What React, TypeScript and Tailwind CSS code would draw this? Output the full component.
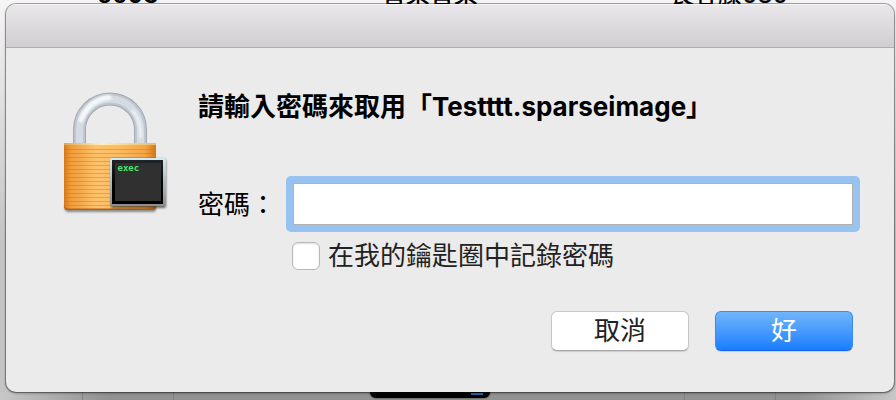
import { useState } from "react";

const stripes = Array.from({ length: 16 }, (_, i) => 58 + i * 4 - 0.5);

function LockIcon() {
  return (
    <svg viewBox="0 -1 108 124" className="h-[124px] w-[108px] shrink-0" role="img" aria-label="exec">
      <defs>
        <linearGradient id="body" x1="0" x2="1" y1="0" y2="0">
          <stop offset="0" stopColor="#d67a1c" />
          <stop offset="0.07" stopColor="#f09a38" />
          <stop offset="0.35" stopColor="#ffc26c" />
          <stop offset="0.6" stopColor="#fdbb62" />
          <stop offset="0.88" stopColor="#f5a545" />
          <stop offset="1" stopColor="#d47618" />
        </linearGradient>
        <linearGradient id="rim" x1="0" x2="1" y1="0" y2="0">
          <stop offset="0" stopColor="#e3a64c" />
          <stop offset="0.4" stopColor="#fff0bb" />
          <stop offset="1" stopColor="#e9bd6c" />
        </linearGradient>
        <linearGradient id="frame" x1="0" x2="0" y1="0" y2="1">
          <stop offset="0" stopColor="#d3ebf2" />
          <stop offset="0.4" stopColor="#b9c2c6" />
          <stop offset="1" stopColor="#8b8e90" />
        </linearGradient>
        <linearGradient id="screen" x1="0" x2="0" y1="0" y2="1">
          <stop offset="0" stopColor="#222527" />
          <stop offset="0.5" stopColor="#050505" />
          <stop offset="1" stopColor="#000000" />
        </linearGradient>
        <filter id="soft" x="-20%" y="-20%" width="140%" height="140%">
          <feGaussianBlur stdDeviation="1.2" />
        </filter>
      </defs>
      <g fill="none">
        <path d="M17.500 54V37.500A30.500 30.500 0 0 1 78.500 37.500V54" stroke="#a3a9b1" strokeWidth="13" />
        <path d="M17.500 54V37.500A30.500 30.500 0 0 1 78.500 37.500V54" stroke="#bfc6cf" strokeWidth="11" />
        <path d="M17.500 54V37.500A30.500 30.500 0 0 1 78.500 37.500V54" stroke="#d5dbe2" strokeWidth="7" />
        <path d="M19 28C24 15 35 6 47 5.500" stroke="#f5f8fb" strokeWidth="5" strokeLinecap="round" filter="url(#soft)" />
        <path d="M70 18C76 24 79 32 79 46" stroke="#eef2f6" strokeWidth="3" filter="url(#soft)" />
      </g>
      <rect x="3" y="110" width="91" height="10" rx="3" fill="#555" opacity="0.65" filter="url(#soft)" />
      <path d="M2 51H94V114Q94 118 90 118H6Q2 118 2 114Z" fill="url(#body)" />
      <g stroke="#c86f12" strokeWidth="1" opacity="0.4">
        {stripes.map((y) => (
          <path key={y} d={`M2 ${y}H94`} />
        ))}
      </g>
      <rect x="2" y="51" width="92" height="2" fill="url(#rim)" />
      <path d="M2 113V114Q2 118 6 118H90Q94 118 94 114V113Q94 116.500 89 116.500H7Q2 116.500 2 113Z" fill="#b76114" />
      <rect x="49" y="67" width="55" height="49" rx="2" fill="#222" opacity="0.65" filter="url(#soft)" />
      <rect x="48" y="66" width="56" height="48" rx="2" fill="url(#frame)" />
      <rect x="50" y="68" width="51" height="44" fill="url(#screen)" />
      <rect x="53" y="71" width="46" height="38" fill="#303030" />
      <text x="55.500" y="79" fontSize="9" fontWeight="bold" fill="#49e66d" fontFamily="'DejaVu Sans Mono', monospace">
        exec
      </text>
    </svg>
  );
}

function Backdrop() {
  return (
    <div
      aria-hidden="true"
      className="absolute inset-0 overflow-hidden bg-linear-to-b from-[#f5f5f5] via-[#c4c4c4] via-60% to-[#c4c4c4] text-2xl leading-6 font-medium text-black"
    >
      <div className="absolute inset-x-0 bottom-0 h-2 bg-linear-to-r from-[#c8c8c8] via-[#929292] via-12% to-[#929292]" />
      <div className="absolute right-0 bottom-0 h-2 w-24 bg-linear-to-r from-[#929292] to-[#c8c8c8]" />
      <span className="absolute -top-[17px] left-[97px] font-semibold">5093</span>
      <span className="absolute -top-[17px] left-[382px]">音樂音樂</span>
      <span className="absolute -top-[17px] left-[670px]">長客滕080</span>
      <div className="absolute bottom-0 left-[82px] h-2 w-px bg-[#808080]" />
      <div className="absolute bottom-0 left-[173px] h-2 w-px bg-[#808080]" />
      <div className="absolute bottom-0 left-[684px] h-2 w-px bg-[#808080]" />
      <div className="absolute bottom-0 left-[775px] h-2 w-px bg-[#808080]" />
      <div className="absolute bottom-[2px] left-[370px] h-4 w-[120px] rounded-b-md bg-black shadow-[0_0_2px_#222]">
        <div className="absolute bottom-[3px] left-[101px] h-[2px] w-3 bg-[#2769a8]" />
      </div>
    </div>
  );
}

export default function App() {
  const [password, setPassword] = useState("");
  const [remember, setRemember] = useState(false);

  return (
    <main className="relative flex min-h-screen pt-1 pr-[2px] pb-2 pl-[6px] font-[Inter,'Noto_Sans_CJK_TC',sans-serif] text-[26px] leading-8 text-black">
      <Backdrop />
      <section
        role="dialog"
        aria-labelledby="title"
        className="relative flex flex-1 flex-col overflow-hidden rounded-[10px] bg-[#ebebeb] shadow-[0_0_0_1px_#0000004d,0_1px_3px_#00000066]"
      >
        <header className="h-11 shrink-0 border-t border-b border-t-[#f5f5f5] border-b-[#b0adb0] bg-linear-to-b from-[#e9e7ea] to-[#d0ced1]" />
        <form
          className="flex flex-1 items-start gap-7 pt-[43px] pr-[34px] pl-14"
          onSubmit={(event) => event.preventDefault()}
        >
          <LockIcon />
          <div className="min-w-0 flex-1">
            <h1 id="title" className="font-bold whitespace-nowrap">
              請輸入密碼來取用「Testttt.sparseimage」
            </h1>
            <div className="mt-[53px] flex items-center">
              <label htmlFor="password" className="w-[88px] shrink-0 pt-px whitespace-nowrap">
                密碼：
              </label>
              <div className="flex min-w-0 flex-1 rounded-[5px] bg-[#98c3f1] p-[7px]">
                <input
                  id="password"
                  type="password"
                  autoComplete="off"
                  value={password}
                  onChange={(event) => setPassword(event.target.value)}
                  className="h-[42px] min-w-0 flex-1 border border-[#b5b1ae] bg-white px-2 outline-none"
                />
              </div>
            </div>
            <div className="mt-[10px] flex items-center gap-2 pl-[94px] text-[#222]">
              <input
                id="remember"
                type="checkbox"
                checked={remember}
                onChange={(event) => setRemember(event.target.checked)}
                className="size-7 shrink-0 appearance-none rounded-md border border-[#b8b8b8] bg-white shadow-[inset_0_1px_2px_#00000022] checked:bg-[#3a92f7]"
              />
              <label htmlFor="remember" className="leading-7 whitespace-nowrap">
                在我的鑰匙圈中記錄密碼
              </label>
            </div>
            <div className="mt-[41px] flex justify-end gap-[26px] pr-[7px]">
              <button
                type="button"
                className="h-10 w-[138px] rounded-md border border-[#c8c8c8] border-b-[#a9a9a9] bg-white text-[#222] shadow-[0_1px_1px_#00000022]"
              >
                取消
              </button>
              <button
                type="submit"
                className="h-10 w-[138px] rounded-md border border-[#3b8eea] border-b-[#1463ee] bg-linear-to-b from-[#6fb5f9] to-[#167dff] text-white shadow-[0_1px_1px_#00000022]"
              >
                好
              </button>
            </div>
          </div>
        </form>
      </section>
    </main>
  );
}
